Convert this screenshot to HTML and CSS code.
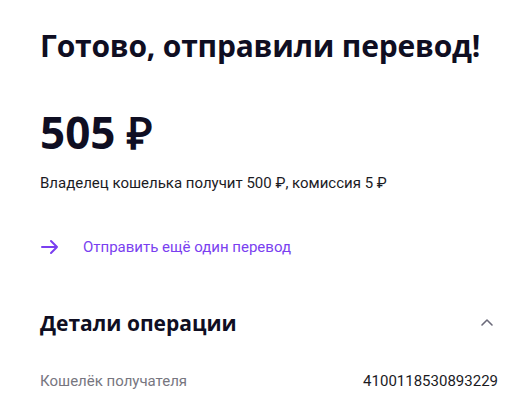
FILE: index.html
```html
<!DOCTYPE html>
<html lang="ru">
<head>
<meta charset="utf-8">
<link rel="stylesheet" href="styles.css">
</head>
<body>
<main class="page">
  <h1 class="title">Готово, отправили перевод!</h1>
  <div class="amount">505 ₽</div>
  <p class="note">Владелец кошелька получит 500 ₽, комиссия 5 ₽</p>
  <a class="link" href="#">
    <svg class="arrow" width="20" height="20" viewBox="0 0 20 20"><path d="M2 10h15M11 4l6 6-6 6" fill="none" stroke="#7a3ff0" stroke-width="2" stroke-linecap="round" stroke-linejoin="round"/></svg>
    <span>Отправить ещё один перевод</span>
  </a>
  <div class="details-head">
    <h2 class="subtitle">Детали операции</h2>
    <svg class="chevron" width="14" height="10" viewBox="0 0 14 10"><path d="M2 7l5-5 5 5" fill="none" stroke="#6b6a7a" stroke-width="1.6" stroke-linecap="round" stroke-linejoin="round"/></svg>
  </div>
  <div class="row">
    <span class="label">Кошелёк получателя</span>
    <span class="value">4100118530893229</span>
  </div>
</main>
</body>
</html>
```
FILE: styles.css
```css
html, body { margin: 0; padding: 0; background: #fff; }
body { font-family: Roboto, "Liberation Sans", sans-serif; color: #1b1b1f; }
.page { padding: 24px 21px 0 40px; }
.title { margin: 0; font-family: "Open Sans", sans-serif; font-weight: 700; font-size: 30px; line-height: 44px; color: #0f0e22; letter-spacing: -0.2px; }
.amount { margin-top: 38px; font-family: "Open Sans", sans-serif; font-weight: 700; font-size: 44px; line-height: 52px; color: #0f0e22; }
.note { margin: 15px 0 0; font-size: 15px; line-height: 20px; color: #1b1b1f; }
.link { margin-top: 43px; display: flex; align-items: center; gap: 23px; text-decoration: none; color: #7a3ff0; font-size: 15px; line-height: 22px; }
.arrow { flex: none; }
.details-head { margin-top: 51px; display: flex; justify-content: space-between; align-items: center; }
.subtitle { margin: 0; font-family: "Open Sans", sans-serif; font-weight: 700; font-size: 21px; line-height: 28px; color: #0f0e22; }
.chevron { margin-right: 4px; }
.row { margin-top: 33px; display: flex; justify-content: space-between; font-size: 15px; line-height: 22px; }
.label { color: #77767f; }
.value { color: #1b1b1f; }
```
